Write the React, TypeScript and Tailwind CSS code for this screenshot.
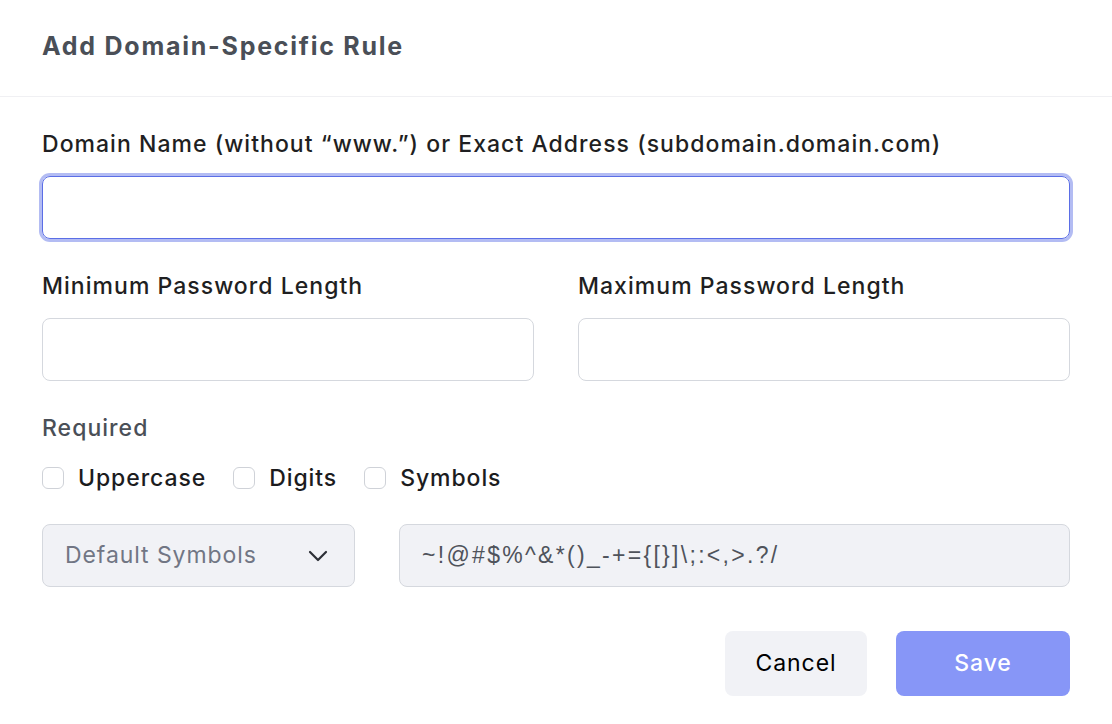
import React, { useState } from 'react';

const font = { fontFamily: 'Inter, "Noto Sans", sans-serif' };

const Checkbox: React.FC<{ label: string; checked: boolean; onChange: () => void }> = ({ label, checked, onChange }) => (
  <label className="flex items-center gap-[14px] cursor-pointer">
    <input
      type="checkbox"
      checked={checked}
      onChange={onChange}
      className="appearance-none w-[22px] h-[22px] rounded-[6px] border border-[#cfd2d8] bg-white checked:bg-[#8796f7]"
    />
    <span className="text-[23px] leading-[28px] font-medium tracking-[0.04em] text-[#1c1c1e]">{label}</span>
  </label>
);

export default function App() {
  const [required, setRequired] = useState({ upper: false, digits: false, symbols: false });
  const [domain, setDomain] = useState('');

  return (
    <div className="w-[1112px] h-[724px] bg-white overflow-hidden" style={font}>
      <div className="h-[97px] border-b border-[#f0f0f3] px-[42px] flex items-center">
        <h2 className="text-[25px] font-bold tracking-[0.07em] text-[#4a4f57] -mt-[2px]">Add Domain-Specific Rule</h2>
      </div>

      <div className="px-[42px] pt-[33px]">
        <label className="block text-[23px] leading-[28px] font-medium tracking-[0.045em] text-[#1f1f22]">
          Domain Name (without “www.”) or Exact Address (subdomain.domain.com)
        </label>
        <input
          autoFocus
          value={domain}
          onChange={e => setDomain(e.target.value)}
          className="mt-[18px] w-full h-[63px] rounded-[8px] border border-[#5b6ee6] ring-[3px] ring-[#b3bcf3] outline-none px-4 text-[22px]"
        />

        <div className="grid grid-cols-2 gap-x-[44px] mt-[33px]">
          <div>
            <label className="block text-[23px] leading-[28px] font-medium tracking-[0.045em] text-[#1f1f22]">Minimum Password Length</label>
            <input className="mt-[18px] w-full h-[63px] rounded-[8px] border border-[#d5d8de] outline-none px-4 text-[22px]" />
          </div>
          <div>
            <label className="block text-[23px] leading-[28px] font-medium tracking-[0.045em] text-[#1f1f22]">Maximum Password Length</label>
            <input className="mt-[18px] w-full h-[63px] rounded-[8px] border border-[#d5d8de] outline-none px-4 text-[22px]" />
          </div>
        </div>

        <div className="mt-[33px] text-[23px] leading-[28px] font-medium tracking-[0.045em] text-[#4a4f57]">Required</div>
        <div className="mt-[22px] flex items-center gap-[27px]">
          <Checkbox label="Uppercase" checked={required.upper} onChange={() => setRequired(p => ({ ...p, upper: !p.upper }))} />
          <Checkbox label="Digits" checked={required.digits} onChange={() => setRequired(p => ({ ...p, digits: !p.digits }))} />
          <Checkbox label="Symbols" checked={required.symbols} onChange={() => setRequired(p => ({ ...p, symbols: !p.symbols }))} />
        </div>

        <div className="mt-[32px] flex gap-[44px]">
          <div className="w-[313px] h-[63px] rounded-[8px] border border-[#d5d8de] bg-[#f1f2f6] flex items-center justify-between pl-[22px] pr-[26px]">
            <span className="text-[23px] tracking-[0.04em] text-[#717684]">Default Symbols</span>
            <svg width="20" height="12" viewBox="0 0 20 12" fill="none">
              <path d="M2 2l8 8 8-8" stroke="#2c2f36" strokeWidth="2.2" strokeLinecap="round" strokeLinejoin="round" />
            </svg>
          </div>
          <div
            className="flex-1 h-[63px] rounded-[8px] border border-[#d5d8de] bg-[#f1f2f6] flex items-center px-[22px] text-[23px] tracking-[0.1em] text-[#4f535b]"
            style={{ fontFamily: '"Liberation Sans", Arial, sans-serif' }}
          >
            ~!@#$%^&amp;*()_-+={'{'}[{'}'}]\;:&lt;,&gt;.?/
          </div>
        </div>

        <div className="mt-[44px] flex justify-end gap-[29px]">
          <button className="w-[142px] h-[65px] rounded-[8px] bg-[#f1f2f6] text-[23px] tracking-[0.04em] text-black">Cancel</button>
          <button className="w-[174px] h-[65px] rounded-[8px] bg-[#8796f7] text-[23px] tracking-[0.04em] font-medium text-white">Save</button>
        </div>
      </div>
    </div>
  );
}
